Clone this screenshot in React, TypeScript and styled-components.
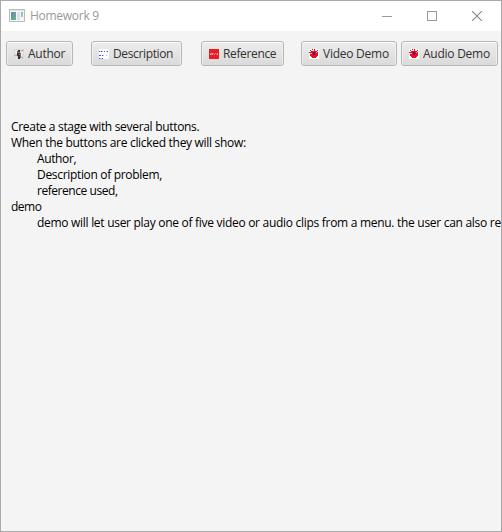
import React from "react";
import styled, { createGlobalStyle } from "styled-components";

const Global = createGlobalStyle`
  * { box-sizing: border-box; }
  body { margin: 0; overflow: hidden; background: #f4f4f4; }
`;

const Window = styled.main`
  width: 502px;
  height: 532px;
  overflow: hidden;
  border: 1px solid #a9a9a9;
  background: #f4f4f4;
  font-family: "Open Sans", "Noto Sans", sans-serif;
  font-size: 12px;
`;

const TitleBar = styled.header`
  display: flex;
  align-items: center;
  height: 30px;
  padding-left: 8px;
  background: #fff;
`;

const Title = styled.h1`
  flex: 1;
  margin: 0 0 0 5px;
  font-size: 12px;
  font-weight: 400;
  line-height: 28px;
  letter-spacing: -0.28px;
  color: #999;
`;

const Control = styled.button`
  display: grid;
  place-items: center;
  width: 45px;
  height: 29px;
  padding: 0;
  border: 0;
  background: none;
`;

const Controls = styled.div`
  display: flex;
  margin-right: 2px;
`;

const Toolbar = styled.nav`
  display: grid;
  grid-template-columns: 85px 110px 100px 100px 97px;
  height: 87px;
  padding: 10px 0 0 5px;
`;

const ActionButton = styled.button<{ $width: number; $spacing: number }>`
  display: flex;
  align-items: center;
  gap: 4px;
  width: ${(p) => p.$width}px;
  height: 25px;
  padding: 1px 0 0 7px;
  border: 1px solid #b7b7b7;
  border-radius: 3px;
  background: linear-gradient(#ededed, #dadada);
  box-shadow: inset 0 1px 0 #fbfbfb, inset 1px 0 0 #efefef, inset -1px 0 0 #efefef;
  color: #323232;
  font: inherit;
  line-height: 20px;
  letter-spacing: ${(p) => p.$spacing}px;
  white-space: nowrap;

  svg { flex: none; }
`;

const Document = styled.section`
  padding: 1px 0 0 10px;
  color: #000;
`;

const Line = styled.p<{ $indent?: boolean; $spacing: number }>`
  width: max-content;
  margin: 0;
  padding-left: ${(p) => (p.$indent ? 26 : 0)}px;
  line-height: 16px;
  letter-spacing: ${(p) => p.$spacing}px;
  white-space: nowrap;
`;

const WindowIcon = () => (
  <svg width="16" height="14" viewBox="0 0 16 14" shapeRendering="crispEdges">
    <defs>
      <linearGradient id="pane" x1="0" y1="0" x2="1" y2="1">
        <stop stopColor="#6488b0" />
        <stop offset="1" stopColor="#6bb58c" />
      </linearGradient>
    </defs>
    <path fill="#b9bdc1" d="M0 0h16v13H0z" />
    <path fill="#f5f6f7" d="M1 2h14v10H1z" />
    <path fill="#dfe3e6" d="M1 1h14v1H1z" />
    <path fill="url(#pane)" d="M2 3h5v8H2z" />
    <path fill="#dce1e7" d="M8 3h3v8H8z" />
    <path fill="#8fb0d8" d="M12 3h2v2h-2z" />
    <path fill="#98cb9c" d="M12 5h2v3h-2z" />
  </svg>
);

const AuthorIcon = () => (
  <svg width="10" height="10" shapeRendering="crispEdges">
    <path fill="#d8d7d5" d="M0 0h10v10H0z" />
    <path fill="#ebeae8" d="M1 1h2v4H1zM7 3h2v4H7zM1 8h2v2H1z" />
    <path fill="#bbb" d="M0 6h3v1H0zM7 1h3v1H7zM7 8h2v1H7z" />
    <path fill="#3d3335" d="M4 1h2v2H4zM3 4h3v3H3zM4 7h2v3H4z" />
    <path fill="#a9736f" d="M4 3h2v1H4zM5 5h1v1H5z" />
    <path fill="#777" d="M3 2h1v2H3zM6 4h1v5H6z" />
  </svg>
);

const DescriptionIcon = () => (
  <svg width="10" height="10" shapeRendering="crispEdges">
    <path fill="#fff" d="M0 0h10v10H0z" />
    <path fill="#5050ed" d="M0 2h1v1H0zM2 2h1v1H2zM5 2h1v1H5zM8 2h1v1H8zM0 6h2v1H0zM3 6h1v1H3zM0 9h1v1H0zM3 9h1v1H3z" />
    <path fill="#b4b4f6" d="M1 2h1v1H1zM3 2h1v1H3zM7 2h1v1H7zM4 6h1v1H4zM7 6h1v1H7zM1 9h2v1H1z" />
  </svg>
);

const ReferenceIcon = () => (
  <svg width="10" height="10" shapeRendering="crispEdges">
    <path fill="#ed1c24" d="M0 0h10v10H0z" />
    <path fill="#f8a0a3" d="M1 5h1v1H1zM3 4h1v2H3zM5 5h1v1H5zM8 4h1v2H8z" />
    <path fill="#f36c71" d="M1 4h2v1H1zM2 5h1v1H2zM4 4h1v1H4zM6 4h1v1H6zM7 5h1v1H7z" />
  </svg>
);

const DemoIcon = () => (
  <svg width="10" height="10" shapeRendering="crispEdges">
    <path fill="#fff" d="M0 0h10v10H0z" />
    <path fill="#f50a12" d="M1 1h1v1H1zM3 0h1v1H3zM5 0h1v2H5zM8 1h1v1H8zM2 2h6v1H2zM1 3h8v4H1zM2 7h6v1H2zM3 8h4v1H3zM0 3h1v1H0z" />
    <path fill="#f9b4b6" d="M1 4h2v1H1zM7 3h1v1H7z" />
    <path fill="#2323b4" d="M4 3h2v3H4z" />
  </svg>
);

const actions = [
  { label: "Author", width: 67, spacing: -0.28, Icon: AuthorIcon },
  { label: "Description", width: 91, spacing: -0.36, Icon: DescriptionIcon },
  { label: "Reference", width: 83, spacing: -0.36, Icon: ReferenceIcon },
  { label: "Video Demo", width: 96, spacing: -0.25, Icon: DemoIcon },
  { label: "Audio Demo", width: 97, spacing: -0.25, Icon: DemoIcon },
];

const lines = [
  { text: "Create a stage with several buttons.", spacing: -0.31 },
  { text: "When the buttons are clicked they will show:", spacing: -0.3 },
  { text: "Author,", indent: true, spacing: -0.38 },
  { text: "Description of problem,", indent: true, spacing: -0.32 },
  { text: "reference used,", indent: true, spacing: -0.45 },
  { text: "demo", spacing: -0.5 },
  {
    text: "demo will let user play one of five video or audio clips from a menu. the user can also re",
    indent: true,
    spacing: -0.29,
  },
];

export default function App() {
  return (
    <>
      <Global />
      <Window>
        <TitleBar>
          <WindowIcon />
          <Title>Homework 9</Title>
          <Controls>
            <Control aria-label="Minimize">
              <svg width="10" height="10" shapeRendering="crispEdges"><path fill="#999" d="M0 5h10v1H0z" /></svg>
            </Control>
            <Control aria-label="Maximize">
              <svg width="10" height="10" shapeRendering="crispEdges"><path fill="none" stroke="#999" d="M.5.5h9v9h-9z" /></svg>
            </Control>
            <Control aria-label="Close">
              <svg width="10" height="10"><path fill="none" stroke="#888" strokeWidth="1.1" d="M0 0l10 10M10 0L0 10" /></svg>
            </Control>
          </Controls>
        </TitleBar>
        <Toolbar>
          {actions.map(({ label, width, spacing, Icon }) => (
            <ActionButton key={label} $width={width} $spacing={spacing}>
              <Icon />
              {label}
            </ActionButton>
          ))}
        </Toolbar>
        <Document>
          {lines.map(({ text, indent, spacing }) => (
            <Line key={text} $indent={indent} $spacing={spacing}>{text}</Line>
          ))}
        </Document>
      </Window>
    </>
  );
}
